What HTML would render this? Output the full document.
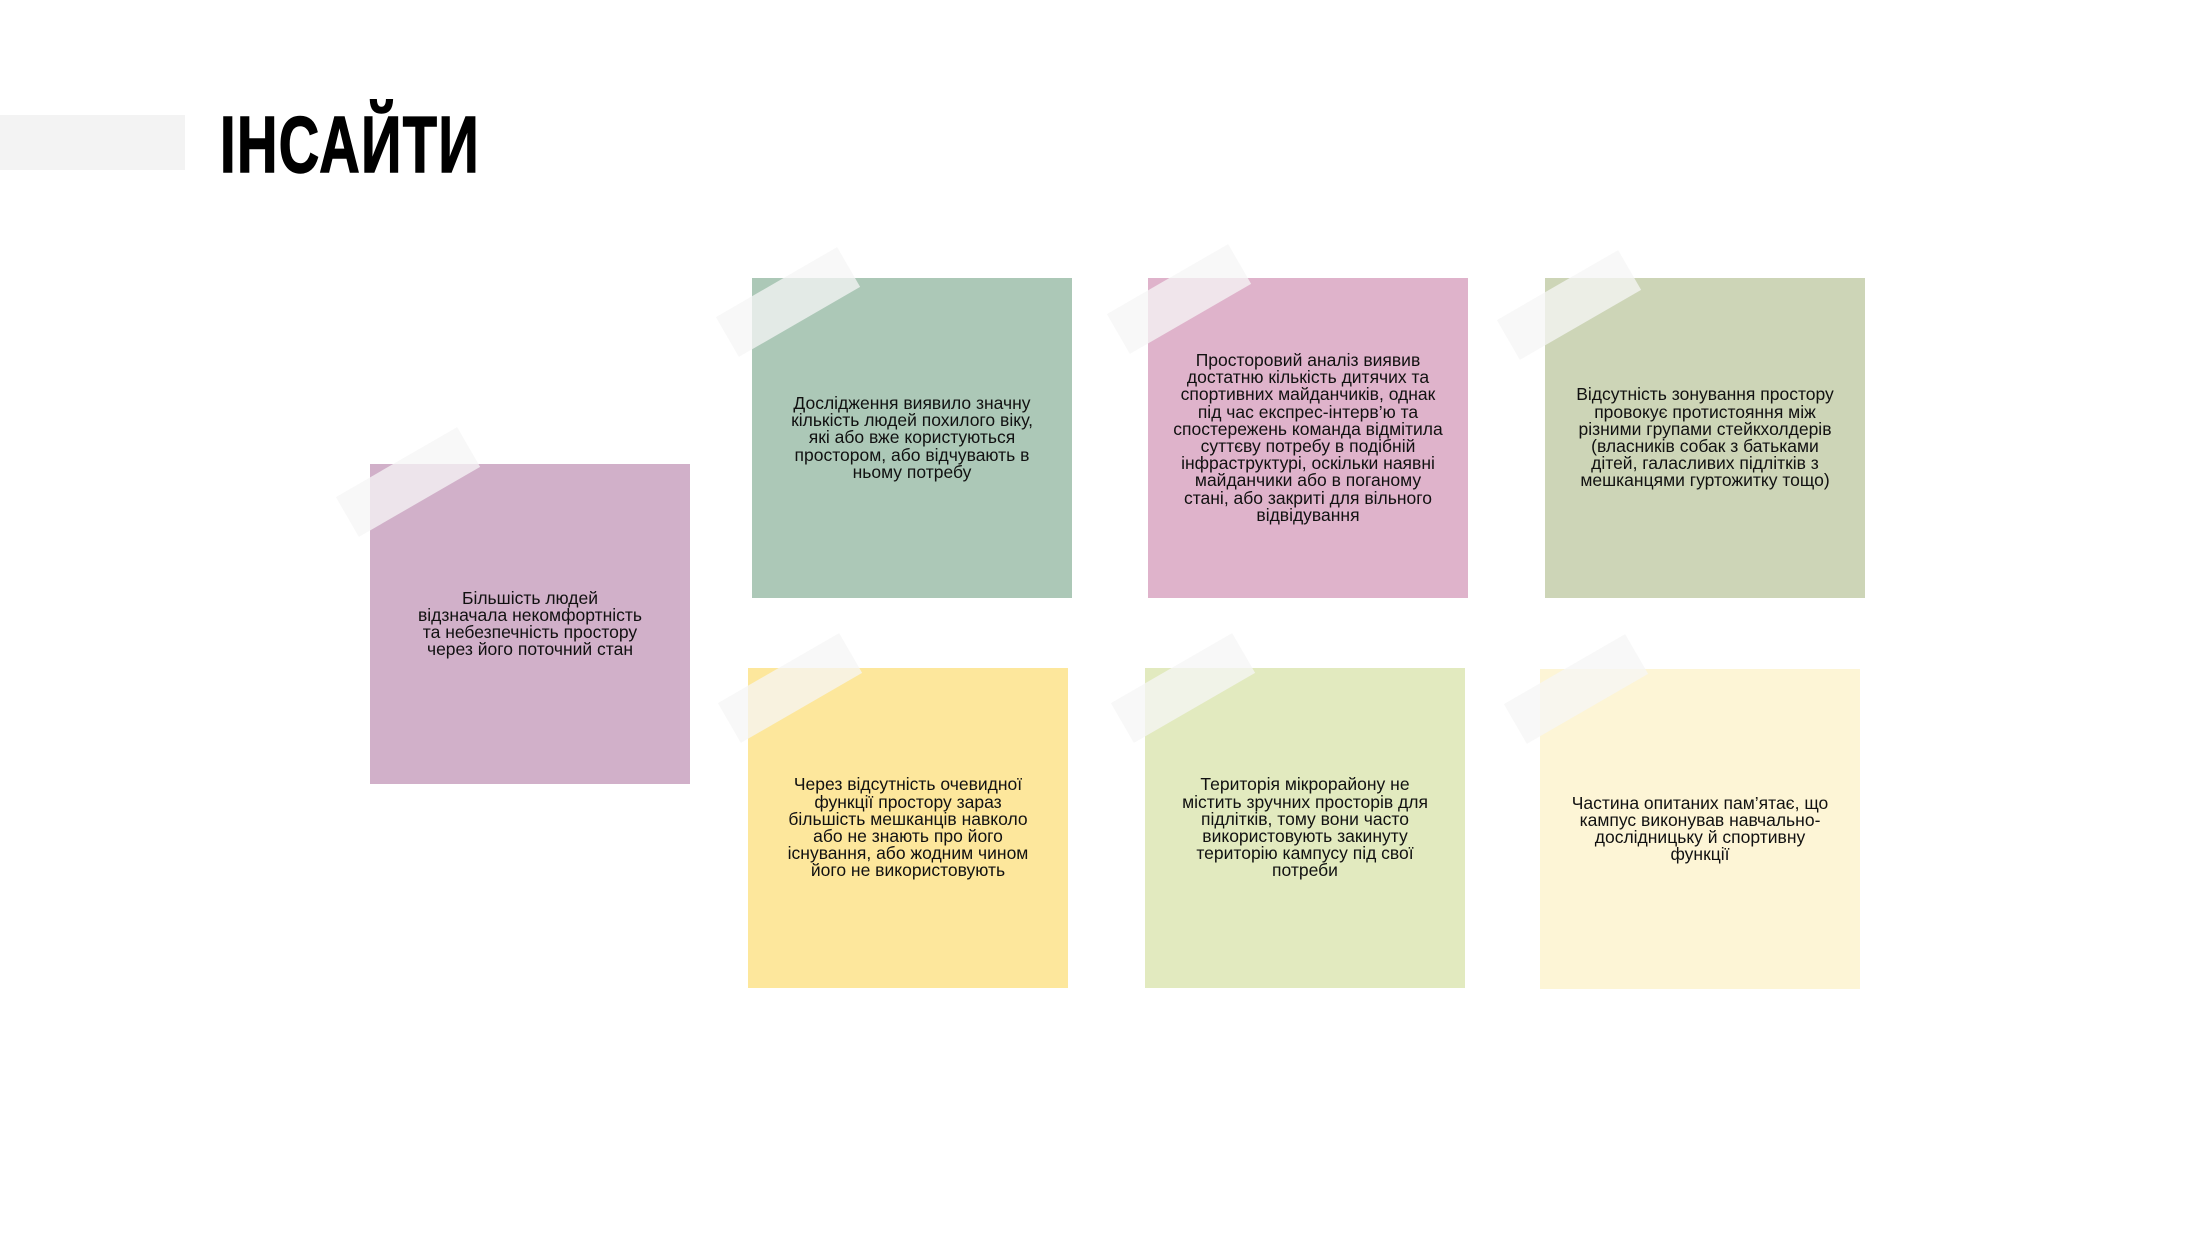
<!DOCTYPE html>
<html><head><meta charset="utf-8"><style>
html,body{margin:0;padding:0;background:#fff;}
body{width:2200px;height:1238px;position:relative;overflow:hidden;font-family:"Liberation Sans","DejaVu Sans",sans-serif;}
.bar{position:absolute;left:0;top:115px;width:185px;height:55px;background:#f3f3f3;}
h1{position:absolute;left:220px;top:97px;margin:0;font-size:80px;line-height:96px;font-weight:bold;letter-spacing:2px;transform:scaleX(0.70);transform-origin:left top;color:#000;-webkit-text-stroke:1.5px #000;}
.note{position:absolute;width:320px;height:320px;display:flex;align-items:center;justify-content:center;text-align:center;font-size:17.5px;line-height:17.2px;color:#111;}
.tape{position:absolute;width:140px;height:46px;background:rgba(245,245,245,0.75);transform:rotate(-30deg);}
</style></head><body>
<div class="bar"></div>
<h1>ІНСАЙТИ</h1>

<div class="note" style="left:370px;top:464px;background:#d1b0c9;">Більшість людей<br>відзначала некомфортність<br>та небезпечність простору<br>через його поточний стан</div>
<div class="note" style="left:752px;top:278px;background:#acc8b7;">Дослідження виявило значну<br>кількість людей похилого віку,<br>які або вже користуються<br>простором, або відчувають в<br>ньому потребу</div>
<div class="note" style="left:1148px;top:278px;background:#dfb3cb;">Просторовий аналіз виявив<br>достатню кількість дитячих та<br>спортивних майданчиків, однак<br>під час експрес-інтерв’ю та<br>спостережень команда відмітила<br>суттєву потребу в подібній<br>інфраструктурі, оскільки наявні<br>майданчики або в поганому<br>стані, або закриті для вільного<br>відвідування</div>
<div class="note" style="left:1545px;top:278px;background:#cdd5b7;">Відсутність зонування простору<br>провокує протистояння між<br>різними групами стейкхолдерів<br>(власників собак з батьками<br>дітей, галасливих підлітків з<br>мешканцями гуртожитку тощо)</div>
<div class="note" style="left:748px;top:668px;background:#fde79c;">Через відсутність очевидної<br>функції простору зараз<br>більшість мешканців навколо<br>або не знають про його<br>існування, або жодним чином<br>його не використовують</div>
<div class="note" style="left:1145px;top:668px;background:#e2eabf;">Територія мікрорайону не<br>містить зручних просторів для<br>підлітків, тому вони часто<br>використовують закинуту<br>територію кампусу під свої<br>потреби</div>
<div class="note" style="left:1540px;top:669px;background:#fdf5d6;">Частина опитаних пам’ятає, що<br>кампус виконував навчально-<br>дослідницьку й спортивну<br>функції</div>

<div class="tape" style="left:338px;top:459px;"></div>
<div class="tape" style="left:718px;top:279px;"></div>
<div class="tape" style="left:1109px;top:276px;"></div>
<div class="tape" style="left:1499px;top:282px;"></div>
<div class="tape" style="left:720px;top:665px;"></div>
<div class="tape" style="left:1113px;top:665px;"></div>
<div class="tape" style="left:1506px;top:666px;"></div>
</body></html>
